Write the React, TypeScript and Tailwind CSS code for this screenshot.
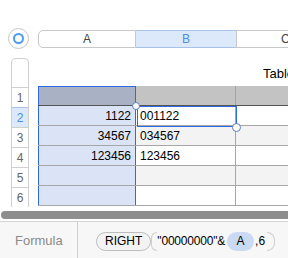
import React from "react";

const rows = [
  { n: 1, a: "", b: "", head: true },
  { n: 2, a: "1122", b: "001122" },
  { n: 3, a: "34567", b: "034567" },
  { n: 4, a: "123456", b: "123456" },
  { n: 5, a: "", b: "" },
  { n: 6, a: "", b: "" },
];

export default function App() {
  return (
    <div
      className="relative w-[288px] h-[258px] overflow-hidden bg-white text-black"
      style={{ fontFamily: '"Liberation Sans", Arial, sans-serif' }}
    >
      {/* column header strip */}
      <div className="flex items-center pt-[28px] pl-[8px]">
        <div className="w-[21px] h-[21px] rounded-full border border-[#c4c4c4] bg-white flex items-center justify-center shrink-0">
          <div className="w-[11px] h-[11px] rounded-full border-2 border-[#4a9cf5]" />
        </div>
        <div className="ml-[9px] flex h-[18px] text-[12px] shrink-0">
          <div className="w-[98px] rounded-l-[5px] border border-[#c8c8c8] flex items-center justify-center text-[#444]">A</div>
          <div className="w-[100px] border-y border-[#a9c3e6] bg-[#dce9fb] flex items-center justify-center text-[#4a8ee8]">B</div>
          <div className="w-[60px] border-y border-l border-[#c8c8c8] flex items-center pl-[44px] text-[#444]">C</div>
        </div>
      </div>

      <div className="flex mt-[9px]">
        {/* row numbers */}
        <div className="ml-[11px] w-[18px] shrink-0 flex flex-col border-x border-t border-[#cfcfcf] rounded-t-[5px] text-[12px] text-[#666]">
          <div className="h-[28px]" />
          {rows.map((r) => (
            <div
              key={r.n}
              className={`h-[20px] border-t flex items-center justify-center ${
                r.n === 2 ? "bg-[#dce9fb] border-[#a9c3e6] text-[#4a8ee8]" : "border-[#cfcfcf]"
              }`}
            >
              {r.n}
            </div>
          ))}
        </div>

        {/* table */}
        <div className="ml-[9px] flex flex-col shrink-0">
          <div className="h-[28px] flex items-start pl-[225px] pt-[6px] text-[13px]">Table 1</div>
          <div className="relative">
            {rows.map((r, i) => (
              <div
                key={r.n}
                className={`flex h-[20px] text-[12px] ${r.head ? "border-b border-[#555]" : "border-b border-[#a6a6a6]"}`}
              >
                <div
                  className={`w-[98px] flex items-center justify-end pr-[4px] border-x border-[#2f6ae0] ${
                    r.head ? "bg-[#a9b2c4] border-t" : "bg-[#dbe4f7]"
                  }`}
                >
                  {r.a}
                </div>
                <div
                  className={`w-[100px] flex items-center pl-[4px] border-r border-[#a6a6a6] ${
                    r.head ? "bg-[#c3c3c3]" : i % 2 === 0 ? "bg-[#f3f3f3]" : "bg-white"
                  }`}
                >
                  {r.b}
                </div>
                <div
                  className={`w-[60px] ${r.head ? "bg-[#c3c3c3]" : i % 2 === 0 ? "bg-[#f3f3f3]" : "bg-white"}`}
                />
              </div>
            ))}
            {/* selected cell B2 */}
            <div className="absolute left-[99px] top-[20px] w-[100px] h-[21px] border border-[#2f6ae0]" />
            <div className="absolute left-[94px] top-[16px] w-[8px] h-[8px] rounded-full border border-[#5a7fc4] bg-white" />
            <div className="absolute left-[194px] top-[37px] w-[9px] h-[9px] rounded-full border border-[#5a7fc4] bg-white" />
          </div>
        </div>
      </div>

      {/* scrollbar */}
      <div className="mt-[2px] h-[2px] bg-white" />
      <div className="ml-[1px] h-[8px] rounded-l-full bg-[#8e8e8e]" />

      {/* formula bar */}
      <div className="mt-[2px] h-[40px] border-t border-[#d6d6d6] bg-[#f7f7f7] flex items-center border-b border-b-[#9a9a9a]">
        <div className="w-[78px] h-full flex items-center pl-[15px] text-[13px] text-[#8a8a8a] border-r border-[#d0d0d0] shrink-0">
          Formula
        </div>
        <div className="flex items-center ml-[18px] text-[12px] text-black shrink-0">
          <span className="h-[19px] px-[8px] rounded-full border border-[#bdbdbd] bg-[#f3f3f3] flex items-center">RIGHT</span>
          <span className="h-[19px] w-[6px] rounded-l-full border-l border-y border-[#cfcfcf]" />
          <span className="tracking-[-0.2px]">"00000000"&amp;</span>
          <span className="ml-[2px] h-[19px] w-[27px] rounded-full bg-[#cadaf3] flex items-center justify-center">A</span>
          <span className="ml-[1px]">,6</span>
          <span className="ml-[2px] h-[19px] w-[8px] rounded-r-full border-r border-y border-[#cfcfcf]" />
        </div>
      </div>
    </div>
  );
}
